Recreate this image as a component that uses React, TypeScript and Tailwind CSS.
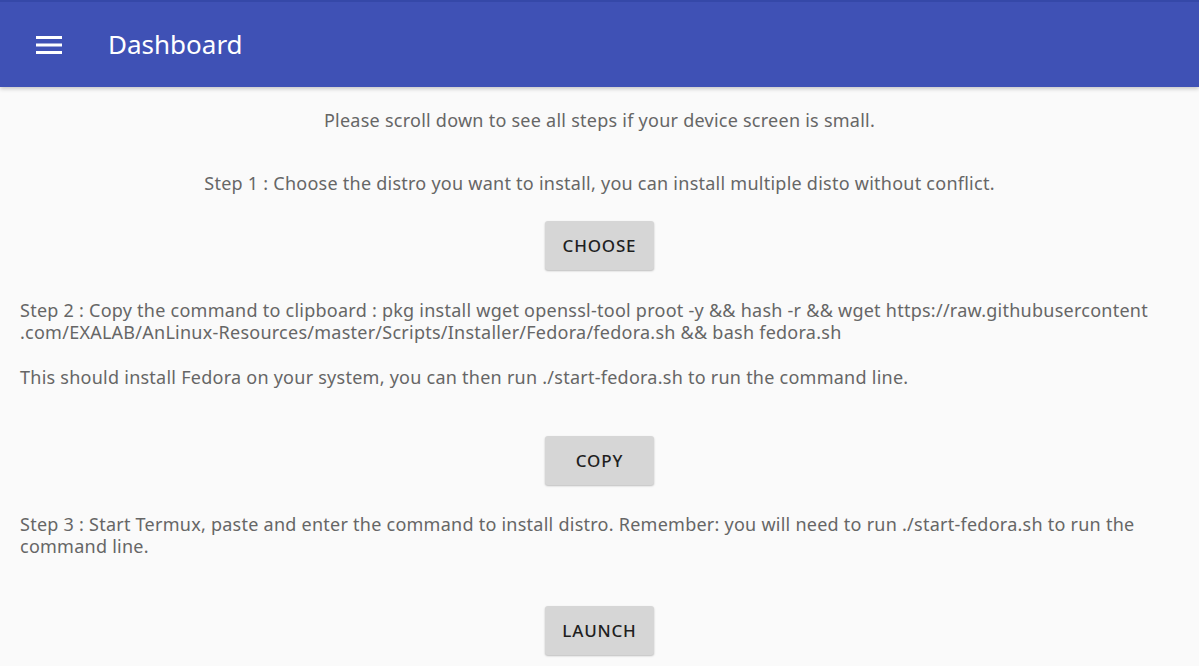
import React from "react";

function Btn({ label }: { label: string }) {
  return (
    <button className="h-[49px] w-[109px] rounded-[3px] bg-[#d6d6d6] text-[17px] font-medium tracking-[0.8px] text-[#1f1f1f] shadow-[0_1px_2px_rgba(0,0,0,0.25)]">
      {label}
    </button>
  );
}

export default function App() {
  return (
    <div
      className="flex h-[666px] w-[1199px] flex-col overflow-hidden bg-[#fafafa]"
      style={{ fontFamily: '"Noto Sans", "Open Sans", sans-serif' }}
    >
      <header className="flex h-[87px] shrink-0 items-center border-t-2 border-[#3548a8] bg-[#3f51b5] shadow-[0_2px_4px_rgba(0,0,0,0.2)]">
        <svg className="ml-[36px]" width="26" height="18" viewBox="0 0 26 18" fill="#fff">
          <rect x="0" y="0" width="26" height="3" />
          <rect x="0" y="7.5" width="26" height="3" />
          <rect x="0" y="15" width="26" height="3" />
        </svg>
        <span className="ml-[46px] text-[26px] text-white">Dashboard</span>
      </header>
      <main className="flex flex-col px-[20px] text-[18px] leading-[22px] tracking-[0.25px] text-[#666666]">
        <p className="mt-[22px] text-center">Please scroll down to see all steps if your device screen is small.</p>
        <p className="mt-[41px] text-center">
          Step 1 : Choose the distro you want to install, you can install multiple disto without conflict.
        </p>
        <div className="mt-[27px] flex justify-center">
          <Btn label="CHOOSE" />
        </div>
        <p className="mt-[29px]">
          Step 2 : Copy the command to clipboard : pkg install wget openssl-tool proot -y &amp;&amp; hash -r &amp;&amp; wget https://raw.githubusercontent
          <br />
          .com/EXALAB/AnLinux-Resources/master/Scripts/Installer/Fedora/fedora.sh &amp;&amp; bash fedora.sh
        </p>
        <p className="mt-[23px]">
          This should install Fedora on your system, you can then run ./start-fedora.sh to run the command line.
        </p>
        <div className="mt-[48px] flex justify-center">
          <Btn label="COPY" />
        </div>
        <p className="mt-[28px]">
          Step 3 : Start Termux, paste and enter the command to install distro. Remember: you will need to run ./start-fedora.sh to run the
          <br />
          command line.
        </p>
        <div className="mt-[49px] flex justify-center">
          <Btn label="LAUNCH" />
        </div>
      </main>
    </div>
  );
}
